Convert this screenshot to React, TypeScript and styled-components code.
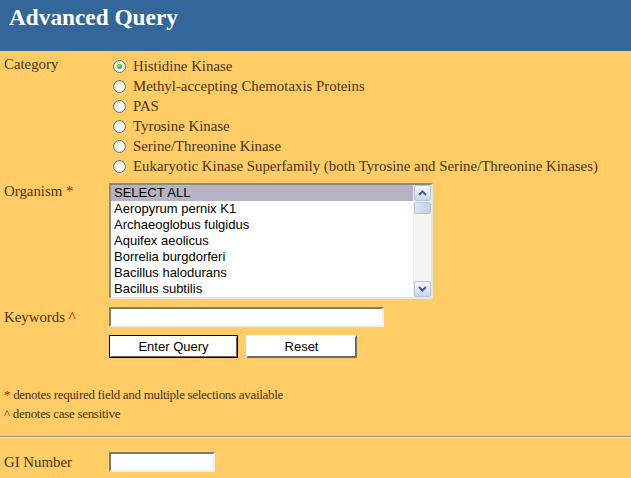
import styled, {createGlobalStyle} from 'styled-components';

const categories = [
    'Histidine Kinase',
    'Methyl-accepting Chemotaxis Proteins',
    'PAS',
    'Tyrosine Kinase',
    'Serine/Threonine Kinase',
    'Eukaryotic Kinase Superfamily (both Tyrosine and Serine/Threonine Kinases)',
];

const organisms = [
    'SELECT ALL',
    'Aeropyrum pernix K1',
    'Archaeoglobus fulgidus',
    'Aquifex aeolicus',
    'Borrelia burgdorferi',
    'Bacillus halodurans',
    'Bacillus subtilis',
];

const GlobalStyle = createGlobalStyle`
    html, body {
        margin: 0;
        padding: 0;
        background: #ffcc66;
    }
    body {
        font-family: "Liberation Serif", "Times New Roman", serif;
        font-size: 14.85px;
        color: #4d3319;
    }
`;

const App = () => {
    return <Page>
        <GlobalStyle/>
        <Header>
            <Title>Advanced Query</Title>
        </Header>

        <Form>
            <Row>
                <Label>Category</Label>
                <RadioList>
                    {categories.map((name, index) => {
                        return <RadioRow key={name}>
                            <Radio $checked={index === 0}/>
                            <span>{name}</span>
                        </RadioRow>;
                    })}
                </RadioList>
            </Row>

            <Row $top={7}>
                <Label>Organism <Mark>*</Mark></Label>
                <ListBox>
                    <Options>
                        {organisms.map((name, index) => {
                            return <Option key={name} $selected={index === 0}>{name}</Option>;
                        })}
                    </Options>
                    <ScrollBar>
                        <ScrollButton>
                            <svg width="9" height="6" viewBox="0 0 9 6">
                                <path d="M1 5 L4.5 1.5 L8 5" fill="none" stroke="#4d6185" strokeWidth="2"/>
                            </svg>
                        </ScrollButton>
                        <Thumb/>
                        <Track/>
                        <ScrollButton>
                            <svg width="9" height="6" viewBox="0 0 9 6">
                                <path d="M1 1 L4.5 4.5 L8 1" fill="none" stroke="#4d6185" strokeWidth="2"/>
                            </svg>
                        </ScrollButton>
                    </ScrollBar>
                </ListBox>
            </Row>

            <Row $top={8}>
                <Label $center>Keywords <Mark>^</Mark></Label>
                <TextInput $width={275}/>
            </Row>

            <Row $top={8}>
                <span/>
                <Buttons>
                    <Button $primary $width={129}>Enter Query</Button>
                    <Button $width={111}>Reset</Button>
                </Buttons>
            </Row>

            <Notes>
                <div><Mark>*</Mark> denotes required field and multiple selections available</div>
                <div><Mark>^</Mark> denotes case sensitive</div>
            </Notes>
        </Form>

        <Rule/>

        <Form>
            <Row $top={9}>
                <Label $center>GI Number</Label>
                <TextInput $width={106}/>
            </Row>
        </Form>
    </Page>;
};

export default App;



const Page = styled.div`
    width: 631px;
    min-height: 478px;
    background: #ffcc66;
`;

const Header = styled.div`
    height: 51px;
    background: #346799;
    padding: 4px 0 0 9px;
    box-sizing: border-box;
`;

const Title = styled.div`
    font-family: "Liberation Serif", "Times New Roman", serif;
    font-weight: bold;
    font-size: 23.3px;
    color: #ffffff;
`;

const Form = styled.div`
    padding: 5px 0 0 4px;
`;

const Row = styled.div<{$top?: number}>`
    display: grid;
    grid-template-columns: 105px auto;
    align-items: start;
    margin-top: ${p => p.$top || 0}px;
`;

const Label = styled.div<{$center?: boolean}>`
    line-height: 20px;
    align-self: ${p => p.$center ? 'center' : 'start'};
    margin-top: ${p => p.$center ? 0 : -2}px;
`;

const Mark = styled.span`
    color: #cc0000;
`;

const RadioList = styled.div`
    display: flex;
    flex-direction: column;
`;

const RadioRow = styled.div`
    display: flex;
    align-items: center;
    height: 20px;
    gap: 7px;
    padding-left: 4px;
    white-space: nowrap;
`;

const Radio = styled.span<{$checked?: boolean}>`
    width: 11px;
    height: 11px;
    border-radius: 50%;
    border: 1px solid #6b7380;
    background: radial-gradient(circle at 65% 65%, #ffffff 0%, #dcdcd6 100%);
    display: inline-flex;
    align-items: center;
    justify-content: center;
    flex-shrink: 0;

    &::after {
        content: '';
        display: ${p => p.$checked ? 'block' : 'none'};
        width: 5px;
        height: 5px;
        border-radius: 50%;
        background: radial-gradient(circle at 40% 40%, #6ee46e, #1e9a1e);
    }
`;

const ListBox = styled.div`
    width: 324px;
    height: 116px;
    box-sizing: border-box;
    border: 2px solid;
    border-color: #8c8a82 #e8e6dc #e8e6dc #8c8a82;
    background: #ffffff;
    display: flex;
`;

const Options = styled.div`
    flex: 1;
    display: flex;
    flex-direction: column;
`;

const Option = styled.div<{$selected?: boolean}>`
    height: 16px;
    line-height: 16px;
    padding-left: 3px;
    font-family: "Liberation Sans", Arial, sans-serif;
    font-size: 13px;
    color: #000000;
    background: ${p => p.$selected ? '#b4b4c4' : 'transparent'};
`;

const ScrollBar = styled.div`
    width: 17px;
    display: flex;
    flex-direction: column;
    background: #f5f5f2;
    border-left: 1px solid #eeeeea;
`;

const ScrollButton = styled.div`
    height: 16px;
    box-sizing: border-box;
    border: 1px solid #b8c4da;
    border-radius: 2px;
    background: linear-gradient(#f4f6fb, #c9d4ec);
    display: flex;
    align-items: center;
    justify-content: center;
`;

const Thumb = styled.div`
    height: 12px;
    margin-top: 1px;
    box-sizing: border-box;
    border: 1px solid #b8c4da;
    border-radius: 2px;
    background: linear-gradient(90deg, #dce4f4, #c4cfe8);
`;

const Track = styled.div`
    flex: 1;
`;

const TextInput = styled.div<{$width: number}>`
    width: ${p => p.$width}px;
    height: 20px;
    box-sizing: border-box;
    border: 2px solid;
    border-color: #7c7a72 #f0eee6 #f0eee6 #7c7a72;
    background: #ffffff;
`;

const Buttons = styled.div`
    display: flex;
    gap: 8px;
`;

const Button = styled.div<{$primary?: boolean, $width: number}>`
    width: ${p => p.$width}px;
    height: 23px;
    box-sizing: border-box;
    border: 2px solid;
    border-color: #ffffff #6b6a66 #6b6a66 #ffffff;
    outline: ${p => p.$primary ? '1px solid #000000' : 'none'};
    outline-offset: -1px;
    background: #ffffff;
    font-family: "Liberation Sans", Arial, sans-serif;
    font-size: 13px;
    color: #000000;
    display: flex;
    align-items: center;
    justify-content: center;
`;

const Notes = styled.div`
    margin-top: 27px;
    line-height: 19px;
    font-size: 13px;
    letter-spacing: -0.3px;
`;

const Rule = styled.div`
    margin-top: 13px;
    height: 0;
    border-top: 1px solid #9a8e78;
    border-bottom: 1px solid #ffe4a8;
`;
